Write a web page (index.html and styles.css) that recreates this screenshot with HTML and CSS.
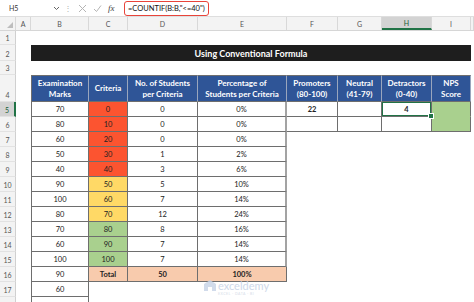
FILE: index.html
```html
<!DOCTYPE html>
<html lang="en">
<head>
<meta charset="UTF-8">
<title>NPS - Using Conventional Formula</title>
<link rel="stylesheet" href="styles.css">
</head>
<body>

<div class="excel">
  <div class="formula-bar">
    <div class="name-box">
      <span>H5</span>
      <svg width="7" height="5" viewBox="0 0 7 5"><path d="M1 1l2.5 2.5L6 1" fill="none" stroke="#666" stroke-width="1"/></svg>
    </div>
    <div class="bar-dots">&#8942;</div>
    <div class="bar-icons">
      <svg width="9" height="9" viewBox="0 0 9 9"><path d="M1 1l7 7M8 1l-7 7" stroke="#b5b5b5" stroke-width="1"/></svg>
      <svg width="9" height="9" viewBox="0 0 9 9"><path d="M1 5l2.5 2.5L8 1.5" fill="none" stroke="#b5b5b5" stroke-width="1"/></svg>
      <span class="fx">fx</span>
    </div>
    <div class="formula-input">=COUNTIF(B:B,"&lt;=40")</div>
  </div>

  <div class="sheet">
    <div class="row col-heads">
      <div class="corner"><span class="corner-tri"></span></div>
      <div class="ch">A</div>
      <div class="ch">B</div>
      <div class="ch">C</div>
      <div class="ch">D</div>
      <div class="ch">E</div>
      <div class="ch">F</div>
      <div class="ch">G</div>
      <div class="ch active">H</div>
      <div class="ch">I</div>
      <div class="ch"></div>
    </div>

    <div class="row r-sm"><div class="rh">1</div></div>
    <div class="row r-title">
      <div class="rh">2</div><div></div>
      <div class="title">Using Conventional Formula</div>
    </div>
    <div class="row r-sm"><div class="rh">3</div></div>

    <div class="row r-head">
      <div class="rh">4</div><div></div>
      <div class="c hd first">Examination<br>Marks</div>
      <div class="c hd">Criteria</div>
      <div class="c hd">No. of Students<br>per Criteria</div>
      <div class="c hd">Percentage of<br>Students per Criteria</div>
      <div class="c hd">Promoters<br>(80-100)</div>
      <div class="c hd">Neutral<br>(41-79)</div>
      <div class="c hd">Detractors<br>(0-40)</div>
      <div class="c hd">NPS<br>Score</div>
    </div>

    <div class="row">
      <div class="rh active">5</div><div></div>
      <div class="c first">70</div><div class="c red">0</div><div class="c">0</div><div class="c pct">0%</div>
      <div class="c b">22</div><div class="c"></div><div class="c b sel">4</div><div class="c nps nps-top"></div>
    </div>
    <div class="row">
      <div class="rh">6</div><div></div>
      <div class="c first">80</div><div class="c red">10</div><div class="c">0</div><div class="c pct">0%</div>
      <div class="c"></div><div class="c"></div><div class="c"></div><div class="c nps"></div>
    </div>
    <div class="row">
      <div class="rh">7</div><div></div>
      <div class="c first">60</div><div class="c red">20</div><div class="c">0</div><div class="c pct">0%</div>
    </div>
    <div class="row">
      <div class="rh">8</div><div></div>
      <div class="c first">50</div><div class="c red">30</div><div class="c">1</div><div class="c pct">2%</div>
    </div>
    <div class="row">
      <div class="rh">9</div><div></div>
      <div class="c first">40</div><div class="c red">40</div><div class="c">3</div><div class="c pct">6%</div>
    </div>
    <div class="row">
      <div class="rh">10</div><div></div>
      <div class="c first">90</div><div class="c yellow">50</div><div class="c">5</div><div class="c pct">10%</div>
    </div>
    <div class="row">
      <div class="rh">11</div><div></div>
      <div class="c first">100</div><div class="c yellow">60</div><div class="c">7</div><div class="c pct">14%</div>
    </div>
    <div class="row">
      <div class="rh">12</div><div></div>
      <div class="c first">80</div><div class="c yellow">70</div><div class="c">12</div><div class="c pct">24%</div>
    </div>
    <div class="row">
      <div class="rh">13</div><div></div>
      <div class="c first">70</div><div class="c green">80</div><div class="c">8</div><div class="c pct">16%</div>
    </div>
    <div class="row">
      <div class="rh">14</div><div></div>
      <div class="c first">60</div><div class="c green">90</div><div class="c">7</div><div class="c pct">14%</div>
    </div>
    <div class="row">
      <div class="rh">15</div><div></div>
      <div class="c first">100</div><div class="c green">100</div><div class="c">7</div><div class="c pct">14%</div>
    </div>
    <div class="row">
      <div class="rh">16</div><div></div>
      <div class="c first">90</div><div class="c total b">Total</div><div class="c total b">50</div><div class="c total b">100%</div>
    </div>
    <div class="row">
      <div class="rh">17</div><div></div>
      <div class="c first">60</div>
    </div>
    <div class="row">
      <div class="rh"></div><div></div>
      <div class="c first"></div>
    </div>

    <div class="watermark">
      <svg width="12" height="11" viewBox="0 0 12 11"><path d="M6 0L12 4v7H8V7H4v4H0V4z" fill="#c9d5e8"/></svg>
      <div class="wm-text">
        <span class="wm-name">exceldemy</span>
        <span class="wm-sub">EXCEL &middot; DATA &middot; BI</span>
      </div>
    </div>
  </div>
</div>

</body>
</html>
```

FILE: styles.css
```css
* {
  box-sizing: border-box;
}
body {
  margin: 0;
  padding: 0;
  background-color: #fff;
  font-family: Lato, "Liberation Sans", sans-serif;
  overflow: hidden;
}
.excel {
  width: 474px;
  height: 302px;
  overflow: hidden;
}

/* formula bar */
.formula-bar {
  height: 17px;
  display: flex;
  align-items: center;
  border-bottom: 1px solid #dedede;
  background-color: #fff;
}
.name-box {
  width: 64px;
  height: 14px;
  display: flex;
  align-items: center;
  justify-content: space-between;
  padding: 0 4px 0 9px;
  font-size: 7px;
  color: #333;
}
.bar-dots {
  width: 8px;
  text-align: center;
  font-size: 8px;
  color: #b0b0b0;
}
.bar-icons {
  width: 52px;
  display: flex;
  align-items: center;
  gap: 6px;
  padding-left: 6px;
}
.fx {
  font-family: "Liberation Serif", serif;
  font-style: italic;
  font-size: 9px;
  color: #444;
}
.formula-input {
  height: 15px;
  display: flex;
  align-items: center;
  padding: 0 3px;
  border: 1.5px solid #e8443a;
  border-radius: 3px;
  font-size: 7.5px;
  color: #111;
}

/* sheet grid */
.sheet {
  position: relative;
}
.row {
  display: grid;
  grid-template-columns: 16px 15px 58px 39px 70px 89px 51px 44px 50px 39px 1fr;
  height: 15px;
  font-size: 7.5px;
  color: #222;
}
.r-sm {
  height: 14px;
}
.r-title {
  height: 16px;
}
.r-head {
  height: 27px;
}
.col-heads {
  height: 14px;
  background-color: #f3f3f3;
  border-bottom: 1px solid #d6d6d6;
}
.ch {
  display: flex;
  align-items: center;
  justify-content: center;
  border-right: 1px solid #d8d8d8;
  font-size: 7px;
  color: #555;
}
.ch.active {
  background-color: #d3d3d3;
  border-bottom: 2px solid #217346;
  color: #185c33;
}
.corner {
  position: relative;
  border-right: 1px solid #d8d8d8;
}
.corner-tri {
  position: absolute;
  right: 2px;
  bottom: 2px;
  border-left: 6px solid transparent;
  border-bottom: 6px solid #bdbdbd;
}
.rh {
  display: flex;
  align-items: flex-end;
  justify-content: center;
  padding-bottom: 2px;
  background-color: #f3f3f3;
  border-right: 1px solid #d0d0d0;
  border-bottom: 1px solid #e2e2e2;
  font-size: 7px;
  color: #555;
}
.rh.active {
  background-color: #d3d3d3;
  border-right: 2px solid #217346;
  color: #185c33;
}

.title {
  grid-column: span 8;
  display: flex;
  align-items: center;
  justify-content: center;
  background-color: #1e1e1e;
  color: #fff;
  font-weight: bold;
  font-size: 9px;
}

/* table cells */
.c {
  display: flex;
  align-items: center;
  justify-content: center;
  border-right: 1px solid #6e6e6e;
  border-bottom: 1px solid #6e6e6e;
  text-align: center;
}
.c.first {
  border-left: 1px solid #6e6e6e;
}
.hd {
  border-top: 1px solid #6e6e6e;
  border-right-color: #9aa6bd;
  background-color: #2f5597;
  color: #fff;
  font-weight: bold;
  font-size: 8px;
  line-height: 1.3;
}
.b {
  font-weight: bold;
}
.pct {
  border-right: 2px solid #a3a3a3;
}
.red {
  background-color: #fc5430;
}
.yellow {
  background-color: #ffd966;
}
.green {
  background-color: #a9d08e;
}
.total {
  background-color: #f8cbad;
}
.nps {
  background-color: #a9d08e;
}
.nps-top {
  border-bottom-color: #a9d08e;
}
.sel {
  position: relative;
  box-shadow: inset 0 0 0 1px #217346;
}
.sel::after {
  content: "";
  position: absolute;
  right: -3px;
  bottom: -3px;
  width: 4px;
  height: 4px;
  background-color: #217346;
  border: 1px solid #fff;
}

.watermark {
  position: absolute;
  left: 204px;
  top: 263px;
  display: flex;
  align-items: flex-start;
  gap: 2px;
  opacity: 0.85;
}
.wm-text {
  display: flex;
  flex-direction: column;
  gap: 1px;
  line-height: 1;
}
.wm-name {
  font-size: 11px;
  color: #c6d2e6;
}
.wm-sub {
  font-size: 3.5px;
  line-height: 4px;
  letter-spacing: 0.5px;
  color: #cfd8e6;
}
```
